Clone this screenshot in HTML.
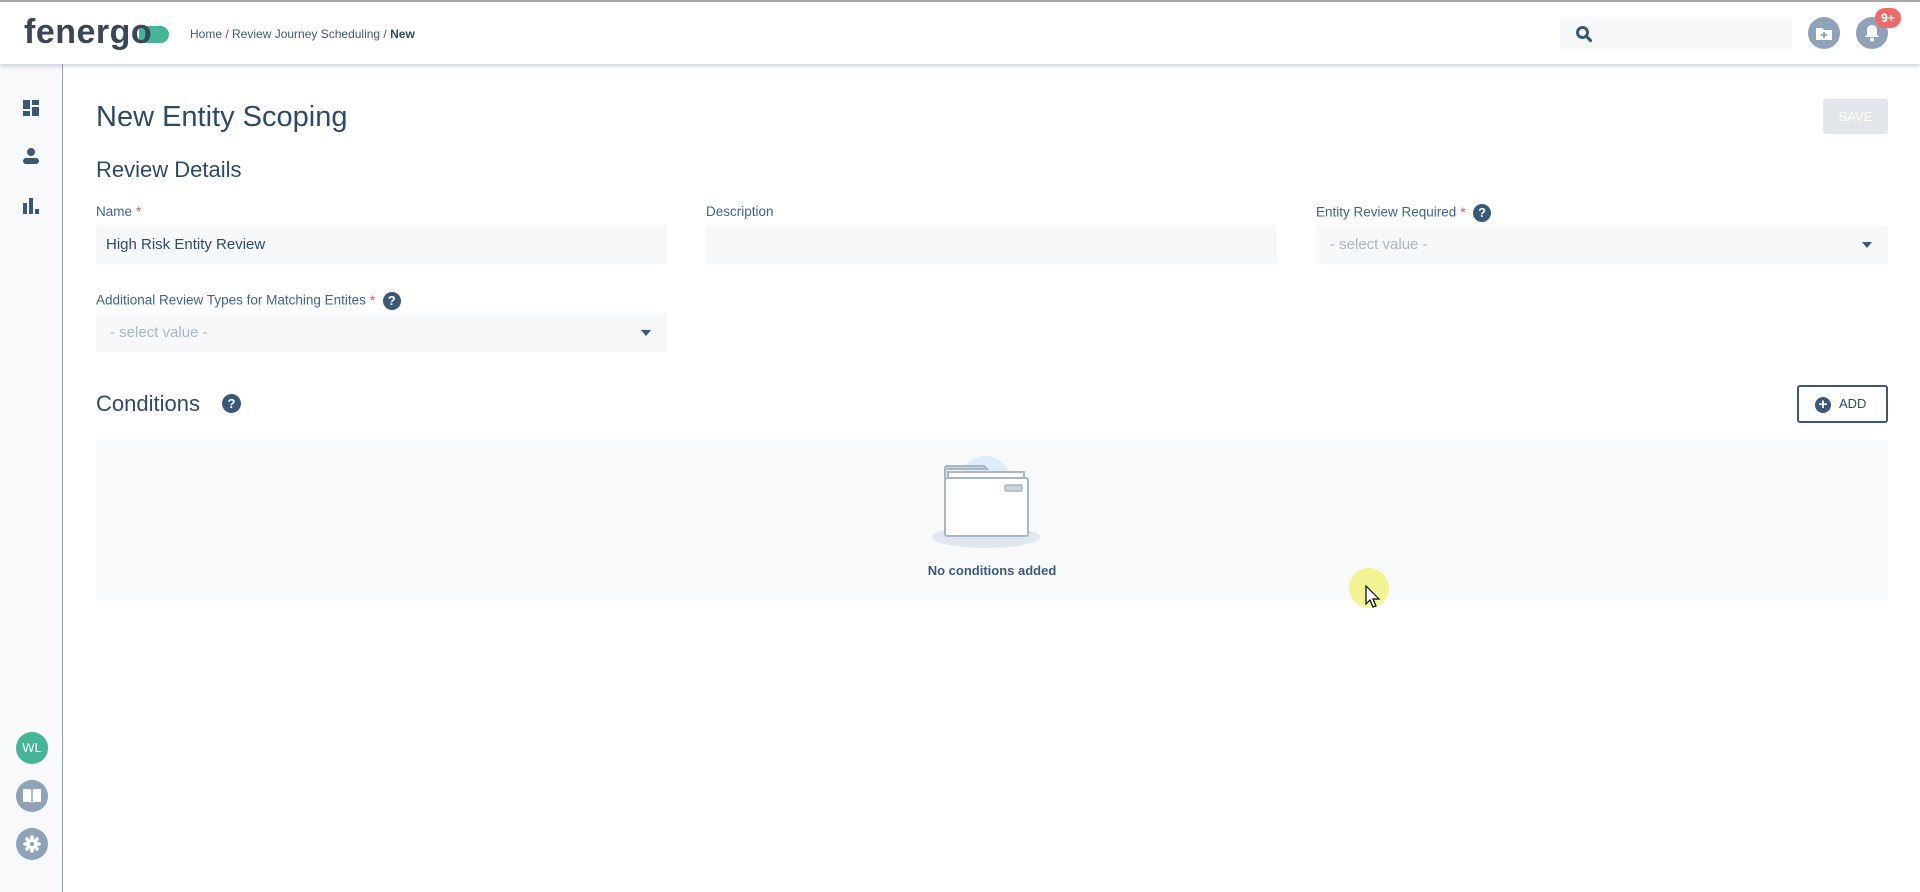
<!DOCTYPE html>
<html><head><meta charset="utf-8"><style>
*{box-sizing:border-box;margin:0;padding:0}
body{width:1920px;height:892px;position:relative;background:#fff;font-family:"Liberation Sans",sans-serif;color:#2f4a68;overflow:hidden}
.abs{position:absolute}
.hdr{left:0;top:0;width:1920px;height:64px;background:#fff;border-top:2px solid #a8a8a8;box-shadow:0 2px 4px rgba(60,80,110,.25);z-index:2}
.side{left:0;top:64px;width:63px;height:828px;background:#f7f9fb;border-right:1px solid #8ea2b8}
.lbl{font-size:13.5px;color:#3d6590}
.req{color:#e55;margin-left:4px}
.inp{background:#f6f8fa;height:39px;border-radius:2px;font-size:15px;padding:0 10px;line-height:39px}
.help{display:inline-block;width:18px;height:18px;border-radius:50%;background:#3b5878;color:#fff;font-size:13px;font-weight:bold;text-align:center;line-height:18px;vertical-align:middle}
.circ{width:32px;height:32px;border-radius:50%;background:#8ea2b8}
</style></head><body>
<div class="abs hdr">
  <div class="abs" style="left:24px;top:11px;font-size:34px;font-weight:bold;color:#3a4556;letter-spacing:0.5px">fenerg<span style="position:relative;display:inline-block"><span class="abs" style="left:8px;top:13px;width:30px;height:17px;border-radius:0 9px 9px 0;background:#45b597"></span><span style="position:relative">o</span></span></div>
  <div class="abs" style="left:190px;top:25px;font-size:12px;color:#3d5a7a">Home / Review Journey Scheduling / <b style="color:#2f4a68">New</b></div>
  <div class="abs" style="left:1560px;top:15px;width:232px;height:32px;background:#f6f8fa;border-radius:4px"></div>
  <svg class="abs" style="left:1575px;top:23px" width="18" height="18" viewBox="0 0 18 18"><circle cx="7.5" cy="7.5" r="5" fill="none" stroke="#3b5878" stroke-width="3"/><path d="M11 11l4.5 4.5" stroke="#3b5878" stroke-width="3.2" stroke-linecap="round"/></svg>
  <div class="abs circ" style="left:1808px;top:15px"></div>
  <svg class="abs" style="left:1814px;top:21px" width="20" height="20" viewBox="0 0 20 20"><path d="M2 5h6l2 2h8v10H2z" fill="#fff"/><path d="M10 9v6M7 12h6" stroke="#8ea2b8" stroke-width="1.8"/></svg>
  <div class="abs circ" style="left:1856px;top:15px"></div>
  <svg class="abs" style="left:1863px;top:21px" width="18" height="20" viewBox="0 0 18 20"><path d="M9 2c-3.5 0-5 2.5-5 5.5v4L2 14h14l-2-2.5v-4C14 4.5 12.5 2 9 2z" fill="#fff"/><circle cx="9" cy="16.5" r="2" fill="#fff"/></svg>
  <div class="abs" style="left:1875px;top:6px;width:26px;height:20px;border-radius:10px;background:#ee6b6b;color:#fff;font-size:12px;font-weight:bold;text-align:center;line-height:20px">9+</div>
</div>
<div class="abs side">
  <svg class="abs" style="left:23px;top:36px" width="16" height="16" viewBox="0 0 16 16" fill="#3b5878"><rect x="0" y="0" width="7" height="9"/><rect x="0" y="11" width="7" height="5"/><rect x="9" y="0" width="7" height="5"/><rect x="9" y="7" width="7" height="9"/></svg>
  <svg class="abs" style="left:23px;top:84px" width="16" height="16" viewBox="0 0 16 16" fill="#3b5878"><circle cx="8" cy="4" r="4"/><rect x="0" y="10" width="16" height="6" rx="3"/></svg>
  <svg class="abs" style="left:23px;top:134px" width="16" height="16" viewBox="0 0 16 16" fill="#3b5878"><rect x="0" y="5" width="4" height="11"/><rect x="6" y="0" width="4" height="16"/><rect x="12" y="11" width="4" height="5"/></svg>
  <div class="abs circ" style="left:16px;top:668px;background:#45b597;color:#fff;font-size:13px;text-align:center;line-height:32px">WL</div>
  <div class="abs circ" style="left:16px;top:716px"></div>
  <svg class="abs" style="left:22px;top:724px" width="20" height="16" viewBox="0 0 20 16"><path d="M1 1h7l1.3 1v13l-1.3-1H1z M19 1h-7l-1.3 1v13l1.3-1h7z" fill="#fff"/></svg>
  <div class="abs circ" style="left:16px;top:764px"></div>
  <svg class="abs" style="left:22px;top:770px" width="20" height="20" viewBox="0 0 20 20"><g stroke="#fff" stroke-width="3.5" stroke-linecap="round"><path d="M10 3v14M3 10h14M5 5l10 10M15 5L5 15"/></g><circle cx="10" cy="10" r="5" fill="#fff"/><circle cx="10" cy="10" r="2.2" fill="#8ea2b8"/></svg>
</div>

<div class="abs" style="left:96px;top:101px;font-size:29px;color:#2f4a68">New Entity Scoping</div>
<div class="abs" style="left:1823px;top:99px;width:65px;height:35px;background:#e3e7ec;border-radius:3px;color:#fff;font-size:13px;text-align:center;line-height:35px">SAVE</div>
<div class="abs" style="left:96px;top:157px;font-size:22px;color:#2f4a68">Review Details</div>

<div class="abs lbl" style="left:96px;top:204px">Name<span class="req">*</span></div>
<div class="abs inp" style="left:96px;top:225px;width:571px;color:#2f4a68">High Risk Entity Review</div>
<div class="abs lbl" style="left:706px;top:204px">Description</div>
<div class="abs inp" style="left:706px;top:225px;width:571px"></div>
<div class="abs lbl" style="left:1316px;top:204px">Entity Review Required<span class="req">*</span> &nbsp;<span class="help">?</span></div>
<div class="abs inp" style="left:1316px;top:225px;width:572px;color:#a9b6c4;padding-left:14px">- select value -<span class="abs" style="right:16px;top:17px;border:5px solid transparent;border-top:6px solid #3b5878"></span></div>

<div class="abs lbl" style="left:96px;top:292px">Additional Review Types for Matching Entites<span class="req">*</span> &nbsp;<span class="help">?</span></div>
<div class="abs inp" style="left:96px;top:313px;width:571px;color:#a9b6c4;padding-left:14px">- select value -<span class="abs" style="right:16px;top:17px;border:5px solid transparent;border-top:6px solid #3b5878"></span></div>

<div class="abs" style="left:96px;top:391px;font-size:22px;color:#2f4a68">Conditions</div>
<div class="abs" style="left:222px;top:394px"><span class="help" style="width:19px;height:19px;line-height:19px">?</span></div>
<div class="abs" style="left:1797px;top:385px;width:91px;height:38px;border:2px solid #3b5878;border-radius:3px;font-size:13px;color:#2f4a68;line-height:34px;padding-left:16px"><span class="help" style="width:16px;height:16px;line-height:16px;font-size:15px;margin-right:8px">+</span>ADD</div>

<div class="abs" style="left:96px;top:440px;width:1792px;height:159px;background:#f7f9fb"></div>
<svg class="abs" style="left:920px;top:450px" width="150" height="100" viewBox="0 0 150 100">
  <ellipse cx="66" cy="87" rx="54" ry="11" fill="#e1e7ee"/>
  <circle cx="65" cy="32" r="26" fill="#dbeefa"/>
  <path d="M25 38v-20a2 2 0 0 1 2-2h37l3 3H27" fill="#c9d3de" stroke="#a9b6c4" stroke-width="2"/>
  <rect x="28" y="22" width="76" height="56" fill="#fff" stroke="#a9b6c4" stroke-width="2"/>
  <rect x="25" y="28" width="83" height="58" rx="2" fill="#fff" stroke="#a9b6c4" stroke-width="2"/>
  <rect x="85" y="35" width="17" height="6" rx="1" fill="#c9d3de" stroke="#a9b6c4" stroke-width="1.5"/>
</svg>
<div class="abs" style="left:896px;top:563px;width:192px;text-align:center;font-size:13px;font-weight:bold;color:#3d5a7a">No conditions added</div>

<div class="abs" style="left:1349px;top:568px;width:40px;height:40px;border-radius:50%;background:rgba(240,240,110,.75)"></div>
<svg class="abs" style="left:1365px;top:585px" width="16" height="24" viewBox="0 0 16 24"><path d="M1 1v18l4-4 3 7 3-1-3-7h6z" fill="#fff" stroke="#000" stroke-width="1.2"/></svg>
</body></html>
